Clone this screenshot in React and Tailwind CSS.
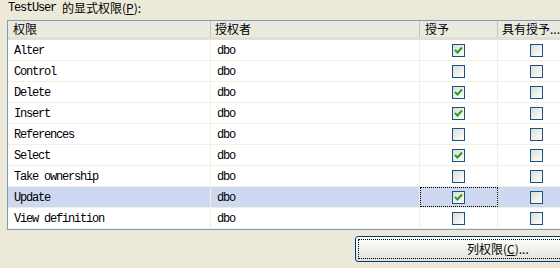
import React from "react";

const rows = [
  ["Alter", true, false],
  ["Control", false, false],
  ["Delete", true, false],
  ["Insert", true, false],
  ["References", false, false],
  ["Select", true, false],
  ["Take ownership", false, false],
  ["Update", true, false, true],
  ["View definition", false, false],
];

const mono = { fontFamily: '"Liberation Mono", "Noto Sans CJK SC", monospace' };

function Box({ checked }) {
  return (
    <div className="w-[13px] h-[13px] border border-[#1c5180] bg-gradient-to-br from-[#dcdcd7] to-[#ffffff] flex items-center justify-center">
      {checked && (
        <svg width="9" height="9" viewBox="0 0 9 9">
          <path d="M1 4 L3.5 6.5 L8 1.5" stroke="#21a121" strokeWidth="2" fill="none" />
        </svg>
      )}
    </div>
  );
}

export default function App() {
  return (
    <div
      className="w-[560px] h-[268px] bg-[#ece9d8] overflow-hidden text-black"
      style={{ fontFamily: '"Noto Sans CJK SC", sans-serif' }}
    >
      <div className="pl-[8px] h-[20px] flex items-center text-[12px] leading-none -mt-[2px]">
        <span className="text-[12px] tracking-[-1.2px]" style={mono}>TestUser</span>
        <span className="ml-[6px]">的显式权限(</span>
        <span className="underline">P</span>
        <span>):</span>
      </div>
      <div className="ml-[7px] mt-[2px] w-[600px] border border-[#7f9db9] border-r-0 bg-white">
        <div className="flex h-[19px] bg-[#ebeae0] border-b-[3px] border-b-[#e2e0d3] text-[12px] leading-none">
          <div className="w-[203px] pl-[5px] flex items-center border-r border-[#c7c5b2]">权限</div>
          <div className="w-[209px] pl-[4px] flex items-center border-r border-[#c7c5b2]">授权者</div>
          <div className="w-[78px] pl-[5px] flex items-center border-r border-[#c7c5b2]">授予</div>
          <div className="flex-1 pl-[4px] flex items-center">具有授予...</div>
        </div>
        {rows.map(([name, grant, withGrant, sel]) => (
          <div
            key={name}
            className={`flex h-[21px] border-b border-[#f1efe2] text-[12px] tracking-[-1.2px] leading-none ${sel ? "bg-[#cfd8f1]" : ""}`}
            style={mono}
          >
            <div className="w-[203px] pl-[6px] pt-[1px] flex items-center border-r border-[#f1efe2]">{name}</div>
            <div className="w-[209px] pl-[6px] pt-[1px] flex items-center border-r border-[#f1efe2]">dbo</div>
            <div className={`w-[78px] flex items-center justify-center border-r border-[#f1efe2] ${sel ? "outline outline-1 outline-dotted outline-black -outline-offset-1" : ""}`}>
              <Box checked={grant} />
            </div>
            <div className="w-[78px] flex items-center justify-center border-r border-[#f1efe2]">
              <Box checked={withGrant} />
            </div>
          </div>
        ))}
      </div>
      <div className="ml-[355px] mt-[6px] w-[240px] h-[26px] rounded-[3px] border border-[#003c74] bg-gradient-to-b from-[#ffffff] to-[#e3e3db] flex items-center p-[2px]">
        <div className="w-full h-full border border-dotted border-black flex items-center pl-[108px] text-[12px] leading-none">
          列权限(<span className="underline">C</span>)...
        </div>
      </div>
    </div>
  );
}
